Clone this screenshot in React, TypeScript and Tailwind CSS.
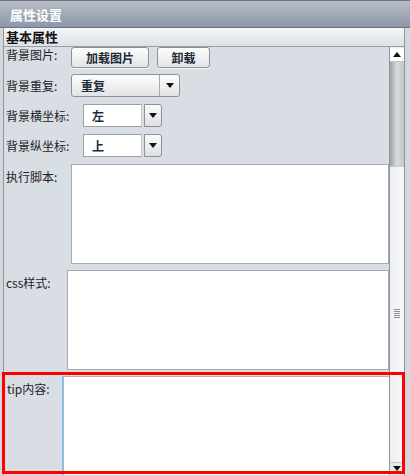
import React from 'react';

const font = { fontFamily: '"Noto Sans CJK SC", "Noto Sans", sans-serif' };

function Arrow({ up = false }: { up?: boolean }) {
  return (
    <svg width="8" height="5" viewBox="0 0 8 5" className="block">
      {up ? <path d="M0 5 L4 0 L8 5 Z" fill="#111" /> : <path d="M0 0 L8 0 L4 5 Z" fill="#111" />}
    </svg>
  );
}

function Btn({ children, className = '' }: { children: React.ReactNode; className?: string }) {
  return (
    <div
      className={`h-[21px] flex items-center justify-center rounded-[3px] border border-[#8e9297] bg-gradient-to-b from-[#fdfdfd] to-[#e3e4e6] text-[12px] font-bold text-[#1c2a36] shadow-[0_1px_0_#f4f5f7] ${className}`}
    >
      {children}
    </div>
  );
}

function Label({ children, className = '' }: { children: React.ReactNode; className?: string }) {
  return <div className={`text-[12px] leading-[16px] text-[#1d2328] whitespace-nowrap ${className}`}>{children}</div>;
}

function Combo({ value }: { value: string }) {
  return (
    <div className="flex items-center gap-[2px]">
      <div className="w-[59px] h-[23px] bg-white border border-[#9ba1a8] border-r-[#c9cdd2] flex items-center pl-[8px] text-[12px] font-bold text-[#1c2a36]">
        {value}
      </div>
      <div className="w-[18px] h-[23px] rounded-r-[3px] border border-[#8e9297] bg-gradient-to-b from-[#fbfbfb] to-[#dfe0e3] flex items-center justify-center">
        <Arrow />
      </div>
    </div>
  );
}

export default function App() {
  return (
    <div className="w-[410px] h-[475px] overflow-hidden bg-[#d3d7de] flex flex-col relative" style={font}>
      {/* title bar */}
      <div className="h-[28px] shrink-0 border-t border-[#6b7280] border-b border-b-[#6d7583] bg-gradient-to-b from-[#b7bdc7] to-[#8c97aa] flex items-center pl-[10px]">
        <span className="text-[13px] font-bold text-white leading-none">属性设置</span>
      </div>

      <div className="flex-1 flex flex-col ml-[3px] w-[402px] border-l border-r border-[#8f959e] min-h-0">
        {/* section header */}
        <div className="h-[19px] shrink-0 bg-gradient-to-b from-[#f4f6f9] to-[#dde0e5] border-b border-[#9aa0a9] flex items-center pl-[2px]">
          <span className="text-[13px] font-bold text-[#111] leading-none -mt-[2px]">基本属性</span>
        </div>

        <div className="flex-1 flex min-h-0">
          {/* content */}
          <div className="flex-1 bg-[#d9dde4] flex flex-col pl-[2px] overflow-hidden">
            <div className="flex items-start h-[21px]">
              <Label className="w-[65px]">背景图片:</Label>
              <Btn className="w-[78px]">加载图片</Btn>
              <Btn className="w-[53px] ml-[8px]">卸载</Btn>
            </div>

            <div className="flex items-center mt-[6px] h-[23px]">
              <Label className="w-[65px]">背景重复:</Label>
              <div className="w-[109px] h-[23px] rounded-[3px] border border-[#8e9297] bg-gradient-to-b from-[#fdfdfd] to-[#e2e3e6] flex items-center">
                <span className="flex-1 pl-[9px] text-[12px] font-bold text-[#1c2a36]">重复</span>
                <div className="w-[20px] h-full border-l border-[#a6aab0] flex items-center justify-center">
                  <Arrow />
                </div>
              </div>
            </div>

            <div className="flex items-center mt-[7px] h-[23px]">
              <Label className="w-[77px]">背景横坐标:</Label>
              <Combo value="左" />
            </div>

            <div className="flex items-center mt-[7px] h-[23px]">
              <Label className="w-[77px]">背景纵坐标:</Label>
              <Combo value="上" />
            </div>

            <div className="flex items-start mt-[7px]">
              <Label className="w-[65px] pt-[5px]">执行脚本:</Label>
              <div className="flex-1 h-[100px] bg-white border border-[#a3aab3]" />
            </div>

            <div className="flex items-start mt-[6px]">
              <Label className="w-[61px] pt-[5px]">css样式:</Label>
              <div className="flex-1 h-[100px] bg-white border border-[#a3aab3]" />
            </div>

            <div className="flex items-start mt-[6px] flex-1">
              <Label className="w-[56px] pt-[5px] pl-[1px]">tip内容:</Label>
              <div className="flex-1 h-full bg-white border-l-2 border-[#8fbde2] border-t border-t-[#a8b4c0]" />
            </div>
          </div>

          {/* scrollbar */}
          <div className="w-[15px] shrink-0 border-l border-[#8f959e] bg-[#e9eaec] flex flex-col">
            <div className="h-[14px] mt-[1px] bg-white border-b border-[#c3c6cb] flex items-center justify-center">
              <Arrow up />
            </div>
            <div className="h-[104px] bg-gradient-to-r from-[#9ea2a8] via-[#d9dbde] to-[#c2c5c9]" />
            <div className="flex-1 bg-gradient-to-r from-[#eceef0] to-[#fafafa] border-t border-[#c7cacf] flex flex-col items-center justify-center">
              <div className="flex flex-col gap-[1px] -mt-[2px]">
                {[0, 1, 2, 3, 4].map((i) => (
                  <div key={i} className="w-[6px] h-[1px] bg-[#8d9197]" />
                ))}
              </div>
            </div>
            <div className="h-[12px] mb-[1px] flex items-center justify-center border-t border-[#c7cacf]">
              <Arrow />
            </div>
          </div>
        </div>
      </div>

      {/* annotation */}
      <div className="absolute left-[2px] top-[372px] w-[403px] h-[102px] border-[3px] border-[#ff0000] pointer-events-none" />
    </div>
  );
}
